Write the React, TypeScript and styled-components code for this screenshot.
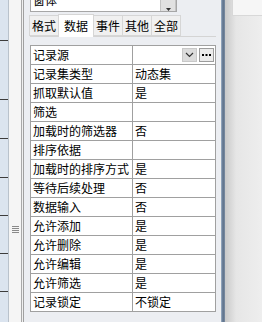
import styled, { createGlobalStyle } from "styled-components";
import { Fragment } from "react";

const GlobalStyle = createGlobalStyle`
  html, body {
    margin: 0;
    padding: 0;
    width: 262px;
    height: 322px;
    overflow: hidden;
    background: #f0f0f0;
  }
  body {
    font-family: "Noto Sans CJK SC", "Noto Sans", sans-serif;
    font-size: 12px;
    color: #000;
  }
`;

const Window = styled.div`
  display: flex;
  width: 262px;
  height: 322px;
  overflow: hidden;
`;

const NavStrip = styled.div`
  width: 8px;
  background: #dbe4ef;
  border-right: 1px solid #b9c2cc;
  display: flex;
  flex-direction: column;
`;

const NavItem = styled.div<{ $h: number }>`
  height: ${(p) => p.$h}px;
  flex: none;
  border-bottom: 1px solid #3c3c3c;
`;

const Splitter = styled.div`
  width: 13px;
  background: #f5f5f5;
  border-right: 1px solid #a9a9a9;
  display: flex;
  align-items: flex-start;
  justify-content: center;
  padding-top: 226px;
  box-sizing: border-box;
`;

const Grip = styled.div`
  width: 7px;
  display: flex;
  flex-direction: column;
  gap: 1px;
  span {
    height: 1px;
    background: #8a8a8a;
  }
`;

const Sheet = styled.div`
  width: 197px;
  margin-left: 1px;
  border-left: 1px solid #a0a0a0;
  background: #eceef2;
  display: flex;
  flex-direction: column;
  padding-left: 6px;
  box-sizing: border-box;
`;

const Combo = styled.div`
  margin-top: -6px;
  width: 147px;
  height: 18px;
  box-sizing: border-box;
  border: 1px solid #a6a6a6;
  background: #fff;
  display: flex;
  align-items: flex-end;
  justify-content: space-between;
  overflow: hidden;
`;

const ComboText = styled.div`
  padding-left: 2px;
  margin-bottom: 5px;
  line-height: 12px;
`;

const ComboButton = styled.div`
  width: 16px;
  height: 16px;
  margin-bottom: -1px;
  box-sizing: border-box;
  background: #e1e1e1;
  border: 1px solid #c4c4c4;
  display: flex;
  align-items: flex-end;
  justify-content: center;
`;

const Tabs = styled.div`
  display: flex;
  align-items: flex-end;
  margin-top: 3px;
  height: 21px;
  border-bottom: 1px solid #d4d4d4;
  margin-right: 4px;
`;

const Tab = styled.div<{ $active?: boolean }>`
  height: ${(p) => (p.$active ? 22 : 19)}px;
  line-height: ${(p) => (p.$active ? 22 : 19)}px;
  padding: 0 ${(p) => (p.$active ? 5 : 2)}px;
  margin-bottom: ${(p) => (p.$active ? -1 : 0)}px;
  background: ${(p) => (p.$active ? "#ffffff" : "#f0f0f0")};
  border: 1px solid #d6d6d6;
  border-bottom: ${(p) => (p.$active ? "none" : "1px solid #d6d6d6")};
  margin-left: -1px;
  font-size: 12px;
  white-space: nowrap;
`;

const Pane = styled.div`
  flex: 1;
  padding-top: 8px;
`;

const Grid = styled.div`
  width: 186px;
  box-sizing: border-box;
  border-top: 1px solid #a0a0a0;
  border-left: 1px solid #a0a0a0;
  display: grid;
  grid-template-columns: 102px 1fr;
  background: #fff;
`;

const Cell = styled.div`
  height: 18px;
  line-height: 18px;
  border-right: 1px solid #a0a0a0;
  border-bottom: 1px solid #a0a0a0;
  padding-left: 2px;
  white-space: nowrap;
  overflow: hidden;
  display: flex;
  align-items: center;
`;

const ValueCell = styled(Cell)`
  padding-left: 2px;
  justify-content: space-between;
`;

const CellButtons = styled.div`
  display: flex;
  gap: 2px;
  margin-left: auto;
  padding-right: 1px;
`;

const DropBtn = styled.div`
  width: 15px;
  height: 14px;
  box-sizing: border-box;
  background: #dcdcdc;
  border: 1px solid #c8c8c8;
  display: flex;
  align-items: center;
  justify-content: center;
`;

const DotsBtn = styled(DropBtn)`
  background: #ebebeb;
  border: 1px solid #9c9c9c;
`;

const Divider = styled.div`
  width: 4px;
  margin-left: 1px;
  background: linear-gradient(to right, #9fb2c9, #5b6f88 50%, #7d8ea3);
`;

const Backdrop = styled.div`
  flex: 1;
  background: linear-gradient(to right, #c9c9c9, #e6e6e6 30%, #eeeeee);
  display: flex;
  justify-content: flex-end;
  align-items: flex-start;
`;

const Corner = styled.div`
  width: 29px;
  height: 15px;
  background: #f6f6f6;
  border-left: 1px solid #d8d8d8;
  border-bottom: 1px solid #d8d8d8;
`;

const navHeights = [40, 58, 38, 38, 37, 37, 37];

const rows: [string, string][] = [
  ["记录集类型", "动态集"],
  ["抓取默认值", "是"],
  ["筛选", ""],
  ["加载时的筛选器", "否"],
  ["排序依据", ""],
  ["加载时的排序方式", "是"],
  ["等待后续处理", "否"],
  ["数据输入", "否"],
  ["允许添加", "是"],
  ["允许删除", "是"],
  ["允许编辑", "是"],
  ["允许筛选", "是"],
  ["记录锁定", "不锁定"],
];

const tabs = ["格式", "数据", "事件", "其他", "全部"];

const Chevron = () => (
  <svg width="9" height="6" viewBox="0 0 9 6">
    <path d="M1 1 L4.5 4.5 L8 1" fill="none" stroke="#333" strokeWidth="1.2" />
  </svg>
);

export default function App() {
  return (
    <>
      <GlobalStyle />
      <Window>
        <NavStrip>
          {navHeights.map((h, i) => (
            <NavItem key={i} $h={h} />
          ))}
        </NavStrip>
        <Splitter>
          <Grip>
            <span />
            <span />
            <span />
            <span />
          </Grip>
        </Splitter>
        <Sheet>
          <Combo>
            <ComboText>窗体</ComboText>
            <ComboButton>
              <svg width="5" height="3" viewBox="0 0 5 3">
                <path d="M0 0 L2.5 3 L5 0" fill="#333" />
              </svg>
            </ComboButton>
          </Combo>
          <Tabs>
            {tabs.map((t) => (
              <Tab key={t} $active={t === "数据"}>
                {t}
              </Tab>
            ))}
          </Tabs>
          <Pane>
            <Grid>
              <Cell>记录源</Cell>
              <ValueCell>
                <CellButtons>
                  <DropBtn>
                    <Chevron />
                  </DropBtn>
                  <DotsBtn>
                    <svg width="9" height="3" viewBox="0 0 9 3">
                      <rect x="0" y="0" width="2" height="2" fill="#000" />
                      <rect x="3.5" y="0" width="2" height="2" fill="#000" />
                      <rect x="7" y="0" width="2" height="2" fill="#000" />
                    </svg>
                  </DotsBtn>
                </CellButtons>
              </ValueCell>
              {rows.map(([k, v]) => (
                <Fragment key={k}>
                  <Cell>{k}</Cell>
                  <ValueCell>{v}</ValueCell>
                </Fragment>
              ))}
            </Grid>
          </Pane>
        </Sheet>
        <Divider />
        <Backdrop>
          <Corner />
        </Backdrop>
      </Window>
    </>
  );
}
